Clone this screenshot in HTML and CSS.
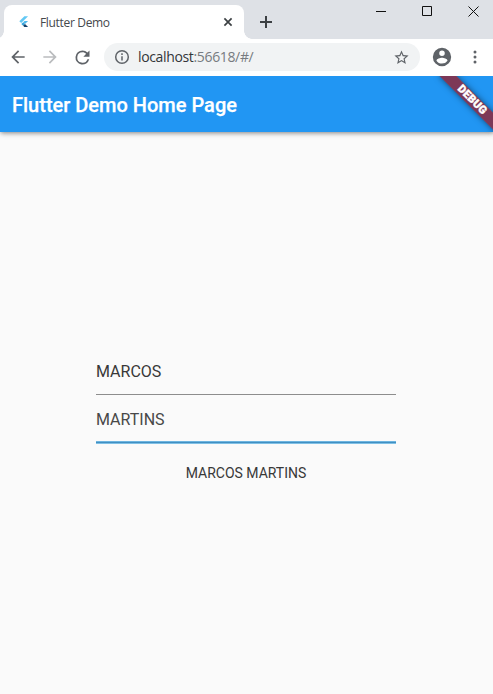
FILE: index.html
```html
<!DOCTYPE html>
<html lang="en">
<head>
<meta charset="utf-8">
<title>Flutter Demo</title>
<link rel="stylesheet" href="styles.css">
</head>
<body>
<div class="window">
  <header class="tabstrip">
    <div class="tab">
      <svg class="favicon" width="16" height="16" viewBox="0 0 16 16">
        <path fill="#62c8f4" d="M8.4 2.2h3.7L5.2 9 3.3 7.2z"/>
        <path fill="#4fb9ec" d="M8.5 6.9h3.6L9 10 7.2 8.2z"/>
        <path fill="#35a5dc" d="M5.3 10.1l1.9-1.9L9 10l-1.9 1.8z"/>
        <path fill="#12406a" d="M7.1 11.8L9 10l3.1 3.1H8.4z"/>
      </svg>
      <span class="tab-title">Flutter Demo</span>
      <svg class="tab-close" width="10" height="10" viewBox="0 0 10 10"><path d="M1.4 1.4l7.2 7.2M8.6 1.4L1.4 8.6"/></svg>
    </div>
    <svg class="new-tab" width="14" height="14" viewBox="0 0 14 14"><path d="M7 1v12M1 7h12"/></svg>
    <div class="window-controls">
      <svg width="11" height="11" viewBox="0 0 11 11"><path d="M0 5.5h10"/></svg>
      <svg width="11" height="11" viewBox="0 0 11 11"><path d="M.5 .5h9v9h-9z"/></svg>
      <svg width="11" height="11" viewBox="0 0 11 11"><path d="M.5 .5l10 10M10.5 .5l-10 10"/></svg>
    </div>
  </header>
  <nav class="toolbar">
    <svg class="nav-icon" width="20" height="20" viewBox="0 0 24 24"><path d="M20 11H7.83l5.59-5.59L12 4l-8 8 8 8 1.41-1.41L7.83 13H20z"/></svg>
    <svg class="nav-icon disabled" width="20" height="20" viewBox="0 0 24 24"><path d="M12 4l-1.41 1.41L16.17 11H4v2h12.17l-5.58 5.59L12 20l8-8z"/></svg>
    <svg class="nav-icon" width="21" height="21" viewBox="0 0 24 24"><path d="M17.65 6.35A7.96 7.96 0 0 0 12 4a8 8 0 1 0 7.73 10h-2.08A6 6 0 1 1 12 6c1.66 0 3.14.69 4.22 1.78L13 11h7V4z"/></svg>
    <div class="omnibox">
      <svg class="info" width="16" height="16" viewBox="0 0 16 16"><circle cx="8" cy="8" r="6.3"/><path d="M8 7.2v4.3M8 4.3v1.7"/></svg>
      <span class="url">localhost<span class="url-rest">:56618/#/</span></span>
      <svg class="nav-icon star" width="17" height="17" viewBox="0 0 24 24"><path d="M22 9.24l-7.19-.62L12 2 9.19 8.63 2 9.24l5.46 4.73L5.82 21 12 17.27 18.18 21l-1.63-7.03zM12 15.4l-3.76 2.27 1-4.28-3.32-2.88 4.38-.38L12 6.1l1.71 4.04 4.38.38-3.32 2.88 1 4.28z"/></svg>
    </div>
    <svg class="nav-icon profile" width="22" height="22" viewBox="0 0 24 24"><path d="M12 2a10 10 0 1 0 0 20 10 10 0 0 0 0-20zm0 3a3 3 0 1 1 0 6 3 3 0 0 1 0-6zm0 14.2a7.2 7.2 0 0 1-6-3.22c.03-1.99 4-3.08 6-3.08 1.99 0 5.97 1.09 6 3.08a7.2 7.2 0 0 1-6 3.22z"/></svg>
    <svg class="nav-icon" width="4" height="14" viewBox="0 0 4 14"><circle cx="2" cy="2" r="1.5"/><circle cx="2" cy="7" r="1.5"/><circle cx="2" cy="12" r="1.5"/></svg>
  </nav>
  <main class="app">
    <div class="appbar"><h1>Flutter Demo Home Page</h1></div>
    <div class="banner">DEBUG</div>
    <section class="form">
      <div class="field">MARCOS</div>
      <div class="field focused">MARTINS</div>
      <p class="result">MARCOS MARTINS</p>
    </section>
  </main>
</div>
</body>
</html>
```
FILE: styles.css
```css
* { box-sizing: border-box; }
body { margin: 0; font-family: Roboto, sans-serif; }
svg { display: block; flex: none; }

.window { width: 493px; height: 694px; display: flex; flex-direction: column; overflow: hidden; background: #fff; }

.tabstrip { height: 39px; flex: none; display: flex; background: #dee1e6; padding-left: 4px; }
.tab {
  position: relative; width: 240px; height: 34px; margin-top: 5px; padding: 0 11px 0 12px;
  display: flex; align-items: center; background: #fff; border-radius: 8px 8px 0 0;
}
.tab::before, .tab::after { content: ""; position: absolute; bottom: 0; width: 8px; height: 8px; }
.tab::before { left: -8px; background: radial-gradient(circle at 0 0, transparent 7.5px, #fff 8px); }
.tab::after { right: -8px; background: radial-gradient(circle at 100% 0, transparent 7.5px, #fff 8px); }
.tab-title { flex: 1; margin-left: 8px; font: 12px "Open Sans", sans-serif; letter-spacing: -0.33px; color: #45484c; }
.tab-close { stroke: #3c4043; stroke-width: 1.7; fill: none; }
.new-tab { margin: 15px 0 0 15px; stroke: #3c4043; stroke-width: 2; fill: none; }
.window-controls { display: flex; gap: 35px; margin: 6px 14px 0 auto; }
.window-controls svg { stroke: #111; stroke-width: 1; fill: none; }

.toolbar { height: 37px; flex: none; display: flex; align-items: center; padding: 0 16px 1px 8px; }
.nav-icon { fill: #5f6368; }
.nav-icon + .nav-icon { margin-left: 12px; }
.disabled { fill: #babcbe; }
.omnibox {
  width: 317px; height: 28px; margin-left: 11px; padding: 0 10px; border-radius: 14px;
  display: flex; align-items: center; background: #f1f3f4;
}
.info { fill: none; stroke: #5f6368; stroke-width: 1.5; }
.url { flex: 1; margin-left: 8px; padding-bottom: 1px; font: 14px "Open Sans", sans-serif; letter-spacing: -0.35px; color: #333639; }
.url-rest { color: #777b80; }
.profile { margin-left: 11px; }
.toolbar .profile + .nav-icon { margin-left: 20px; }

.app { position: relative; flex: 1; overflow: hidden; background: #fafafa; }
.appbar {
  height: 56px; padding: 2px 0 0 12px; display: flex; align-items: center; background: #2196f3;
  box-shadow: 0 2px 4px -1px rgba(0,0,0,.3), 0 1px 6px rgba(0,0,0,.22);
}
.appbar h1 { margin: 0; font-size: 20px; font-weight: 500; line-height: 24px; color: #fff; -webkit-text-stroke: .25px #fff; }
.banner {
  position: absolute; top: 17.5px; right: -18.5px; width: 80px; height: 12px; transform: rotate(45deg);
  background: rgba(151,30,42,.78); box-shadow: 0 0 6px rgba(0,0,0,.5);
  color: #fff; font-size: 11px; font-weight: 900; letter-spacing: .3px; line-height: 12px; text-align: center;
  -webkit-text-stroke: .4px #fff;
}
.form { width: 300px; margin: 215px 0 0 96px; }
.field { height: 48px; padding-top: 13px; font-size: 16px; line-height: 24px; color: #383838; border-bottom: 1px solid #8d8d8d; }
.focused {
  height: 49px; border-bottom: 0; color: #484848;
  background: linear-gradient(#6db5e0 1px, #418fc2 1px 2px, #7fc0e5 2px) bottom / 100% 3px no-repeat;
}
.result { margin: 21px 0 0; font-size: 14px; line-height: 16px; text-align: center; color: #383838; }
```
